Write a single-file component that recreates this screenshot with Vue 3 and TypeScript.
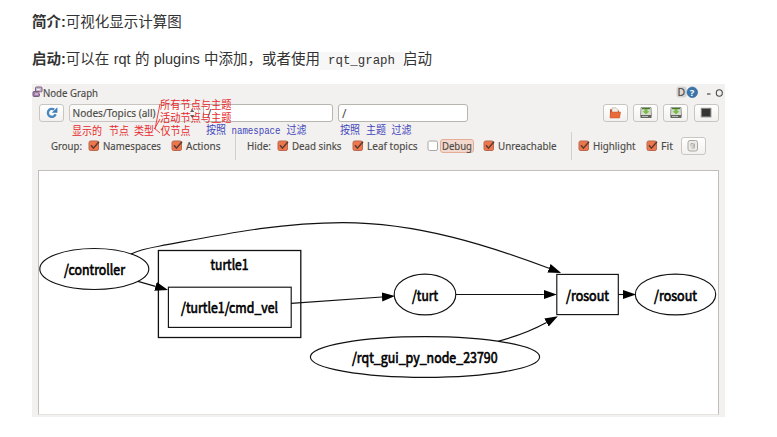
<script setup lang="ts">
interface Label { text: string; x: number; y: number; width: number }

const labels: Label[] = [
  { text: '/controller', x: 64, y: 274.5, width: 61 },
  { text: 'turtle1', x: 210.5, y: 269.5, width: 38 },
  { text: '/turtle1/cmd_vel', x: 181, y: 313, width: 97 },
  { text: '/turt', x: 412, y: 300.5, width: 26 },
  { text: '/rqt_gui_py_node_23790', x: 352, y: 362.5, width: 145.5 },
  { text: '/rosout', x: 566, y: 300.5, width: 43 },
  { text: '/rosout', x: 654, y: 300.5, width: 43 },
]

const redNotes: Label[] = [
  { text: '所有节点与主题', x: 160, y: 109, width: 71.5 },
  { text: '活动节点与主题', x: 160, y: 122, width: 71.5 },
  { text: '仅节点', x: 160.5, y: 135, width: 30 },
  { text: '显示的', x: 72, y: 135, width: 30 },
  { text: '节点', x: 109, y: 135, width: 20 },
  { text: '类型', x: 134, y: 135, width: 20 },
]

const blueNotes: Label[] = [
  { text: '按照', x: 206, y: 134, width: 20 },
  { text: 'namespace', x: 231.5, y: 134, width: 49 },
  { text: '过滤', x: 286.5, y: 134, width: 20 },
  { text: '按照', x: 340, y: 134, width: 20 },
  { text: '主题', x: 366, y: 134, width: 20 },
  { text: '过滤', x: 391.5, y: 134, width: 20 },
]

interface Option { kind: 'text' | 'check' | 'sep'; text?: string; on?: boolean; width: number; fit?: number; hot?: boolean }

const options: Option[] = [
  { kind: 'text', text: 'Group:', width: 37.5, fit: 31 },
  { kind: 'check', text: 'Namespaces', on: true, width: 83, fit: 58 },
  { kind: 'check', text: 'Actions', on: true, width: 63.5, fit: 34.5 },
  { kind: 'sep', width: 12 },
  { kind: 'text', text: 'Hide:', width: 30.5, fit: 24 },
  { kind: 'check', text: 'Dead sinks', on: true, width: 74.5, fit: 49.5 },
  { kind: 'check', text: 'Leaf topics', on: true, width: 75, fit: 50.5 },
  { kind: 'check', text: 'Debug', on: false, width: 56, fit: 30, hot: true },
  { kind: 'check', text: 'Unreachable', on: true, width: 88, fit: 58.5 },
  { kind: 'sep', width: 7 },
  { kind: 'check', text: 'Highlight', on: true, width: 68, fit: 42.5 },
  { kind: 'check', text: 'Fit', on: true, width: 35, fit: 12 },
]
</script>

<template>
  <main class="page">
    <p class="line"><strong>简介:</strong>可视化显示计算图</p>
    <p class="line second"><strong>启动:</strong>可以在 rqt 的 plugins 中添加，或者使用<code>rqt_graph</code>启动</p>

    <section class="window">
      <header class="title">
        <svg class="app" width="11" height="12" viewBox="0 0 11 12">
          <g stroke="#76627b" fill="#c9b6cf"><rect x="3.5" y="1" width="6.5" height="5" rx="1" /><rect x="1" y="5.5" width="6.5" height="5" rx="1" fill="#a17aaa" /></g>
          <path d="M5 3.5h3M3 8h3M8 6v2" stroke="#f3edf4" />
        </svg>
        <svg class="name" width="58" height="14"><text x="0" y="10.5" textLength="55" lengthAdjust="spacingAndGlyphs">Node Graph</text></svg>
        <svg class="controls" width="50" height="16" viewBox="676 84 50 16">
          <rect x="677" y="87" width="9" height="10" rx="2" fill="#dddbd6" stroke="#c3bfb8" stroke-width=".6" />
          <text x="677.5" y="96.3">D</text>
          <circle cx="692.3" cy="92.3" r="5.3" fill="#3975ab" stroke="#2d6297" stroke-width=".6" />
          <text x="689.8" y="96" class="help">?</text>
          <path d="M707 94h3.5" stroke="#4b4a46" stroke-width="1.2" />
          <ellipse cx="719.3" cy="93" rx="3" ry="3.2" fill="none" stroke="#4b4a46" stroke-width="1.1" />
        </svg>
      </header>

      <div class="toolbar">
        <button class="btn" aria-label="Refresh">
          <svg width="14" height="14" viewBox="0 0 14 14"><path d="M10.6 8.3A4 4 0 1 1 9.2 3.6" fill="none" stroke="#4a86c0" stroke-width="2.4" /><path d="M6.8 6.8h5.6V1.200z" fill="#3f7cb8" /></svg>
        </button>
        <div class="combo">
          <svg width="128" height="16"><text x="2.5" y="12" textLength="83" lengthAdjust="spacingAndGlyphs">Nodes/Topics (all)</text><path d="M120 7l2.2-3 2.2 3zM120 10l2.2 3 2.2-3z" fill="#66635f" /></svg>
        </div>
        <div class="field ns">/</div>
        <div class="field topic">/</div>
        <div class="actions">
          <button class="btn" aria-label="Open">
            <svg width="14" height="14" viewBox="0 0 14 14"><path d="M2 3.2h3.5l1 1.2H11v6H2z" fill="#b4512d" /><path d="M4 1.8h4l2 2V8H4z" fill="#f3efe8" stroke="#b9a89d" stroke-width=".6" /><path d="M2.5 6h10l-.8 6H2z" fill="#e96a3a" stroke="#c95527" stroke-width=".5" /></svg>
          </button>
          <button v-for="n in 2" :key="n" class="btn" aria-label="Save">
            <svg width="14" height="14" viewBox="0 0 14 14"><path d="M2 1.5h10l.5 8H1.5z" fill="#d8ddd1" stroke="#74786e" stroke-width=".7" /><path d="M1.5 9h11v3h-11z" fill="#62655f" /><path d="M3 2h8v1.200H3z" fill="#477c26" /><path d="M5.500 3h3v2.300h2L7 8.200 3.500 5.300h2z" fill="#76bb45" /><path d="M3 10.5h6" stroke="#b9bcb6" /></svg>
          </button>
          <button class="btn" aria-label="Image">
            <svg width="14" height="14" viewBox="0 0 14 14"><rect x="2.3" y="2.3" width="9.6" height="8.6" fill="#353535" stroke="#898985" /></svg>
          </button>
        </div>
      </div>

      <div class="options">
        <div v-for="(o, i) in options" :key="i" :class="['option', o.kind]" :style="{ width: o.width + 'px' }">
          <svg v-if="o.kind === 'check'" class="box" width="12" height="12" viewBox="0 0 12 12">
            <rect x="1" y="1" width="9.5" height="9.5" rx="1.6" :fill="o.on ? '#ed764d' : '#fff'" :stroke="o.on ? '#b9694e' : '#aaa6a0'" />
            <path v-if="o.on" d="M3 5.3l2.4 2.9L11 1.8" fill="none" stroke="#5d3a2f" stroke-width="1.5" />
          </svg>
          <span v-if="o.text" :class="{ hot: o.hot }">
            <svg :width="o.fit" height="14"><text x="0" y="10.8" :textLength="o.fit" lengthAdjust="spacingAndGlyphs">{{ o.text }}</text></svg>
          </span>
        </div>
        <button class="btn" aria-label="Fit view">
          <svg width="14" height="14" viewBox="0 0 14 14"><rect x="2" y="1.5" width="9.5" height="10.5" rx="2" fill="#ecebe8" stroke="#aaa7a2" /><path d="M5 4.5h2.2v4M5 4.5v3M8.5 4.5v4M5.5 9h3" fill="none" stroke="#aaa7a2" stroke-width=".9" /></svg>
        </button>
      </div>

      <div class="canvas">
        <svg class="graph" width="679" height="243" viewBox="39 171 679 243">
          <defs>
            <marker id="arrow" markerUnits="userSpaceOnUse" markerWidth="14" markerHeight="10" refX="0" refY="4.5" orient="auto"><path d="M0 0L13 4.5 0 9z" /></marker>
          </defs>
          <g fill="none" stroke="#111" stroke-width="1.15">
            <ellipse cx="94.3" cy="269" rx="54.5" ry="20.5" />
            <rect x="158.4" y="250.5" width="142.4" height="87" stroke-width="1.3" />
            <rect x="168.4" y="287.2" width="122.8" height="40.2" />
            <ellipse cx="425" cy="294.5" rx="30.8" ry="20.4" />
            <ellipse cx="425" cy="357" rx="114.6" ry="20.4" />
            <rect x="556.8" y="274.4" width="61.5" height="40.2" />
            <ellipse cx="675.5" cy="294.5" rx="40.2" ry="20.4" />
            <g marker-end="url(#arrow)">
              <path d="M131 254C139 250 150 247.800 160 246C220 235 278 222.600 343 222.600C418 222.600 490 246 549 268.300" />
              <path d="M138 281.400L155.500 286.400" />
              <path d="M291 303.400L382 297" />
              <path d="M456 294.500H543.800" />
              <path d="M498 341.300C516 336.500 532 330.500 546.500 322.500" />
              <path d="M618.300 294.500H623" />
            </g>
          </g>
          <text v-for="l in labels" :key="l.x" :x="l.x" :y="l.y" :textLength="l.width" lengthAdjust="spacingAndGlyphs">{{ l.text }}</text>
        </svg>
      </div>

      <svg class="notes" width="693" height="333" viewBox="32 84 693 333">
        <g class="red">
          <path d="M155 129L160 104M154.500 129L160 119M154 128L160 133" fill="none" stroke="#e33" stroke-width=".9" />
          <text v-for="(n, i) in redNotes" :key="i" :x="n.x" :y="n.y" :textLength="n.width" lengthAdjust="spacingAndGlyphs">{{ n.text }}</text>
        </g>
        <g class="blue">
          <text v-for="(n, i) in blueNotes" :key="i" :class="{ latin: n.text === 'namespace' }" :x="n.x" :y="n.y" :textLength="n.width" lengthAdjust="spacingAndGlyphs">{{ n.text }}</text>
        </g>
      </svg>
    </section>
  </main>
</template>

<style>
body { background: #fff; }
</style>

<style scoped>
.page { box-sizing: border-box; width: 777px; height: 437px; padding: 10px 32px 0; overflow: hidden; color: #333; font: 14.5px/24px "Liberation Sans", "Noto Sans CJK SC", sans-serif; }
.line { margin: 0; height: 24px; white-space: nowrap; }
.second { margin-top: 13px; word-spacing: .3px; }
code { display: inline-block; height: 18px; line-height: 18px; padding: 0 8px; background: #f7f7f7; font: 12.4px/18px "Liberation Mono", monospace; vertical-align: baseline; }
.window { position: relative; box-sizing: border-box; width: 693px; height: 333px; margin-top: 13px; background: #f2f1ef; font: 10.500px/14px "Noto Sans", sans-serif; color: #4c4a46; }
.window svg { display: block; flex: none; overflow: visible; }
.window svg text { fill: #4c4a46; stroke: #4c4a46; stroke-width: .15px; }
.title { display: flex; align-items: center; height: 16px; }
.title .name { margin-top: 2px; }
.controls { margin-left: auto; margin-right: -1px; }
.window .help { fill: #fff; stroke: none; font-weight: bold; font-size: 9.500px; }
.toolbar { display: flex; align-items: center; height: 18px; margin-top: 4px; padding: 0 6.500px 0 7px; }
.btn { box-sizing: border-box; display: flex; align-items: center; justify-content: center; width: 25px; height: 18px; padding: 0; flex: none; border: 1px solid #c9c6c1; border-radius: 3px; background: linear-gradient(#fff, #f2f1ef); }
.combo { box-sizing: border-box; width: 130px; height: 18px; margin-left: 5px; border: 1px solid #c9c6c1; border-radius: 3px; background: linear-gradient(#fbfbfa, #f2f1ef); }
.field { box-sizing: border-box; height: 18px; width: 130px; padding-left: 3px; border: 1px solid #b8b5af; border-radius: 3px; background: #fff; font-size: 12px; line-height: 17px; }
.ns { margin-left: 4px; }
.topic { margin-left: 5px; }
.actions { display: flex; gap: 5.200px; margin-left: auto; }
.options { display: flex; align-items: center; height: 29px; margin-top: 9px; padding-left: 18.500px; }
.option { display: flex; align-items: center; flex: none; height: 28px; }
.box { margin-right: 3px; }
.sep { box-sizing: border-box; border-left: 1px solid #d3d0cb; }
.hot { padding: 0 1px; margin: 0 -2px; border: 1px solid #e4ad98; border-radius: 3px; background: #f2d8cd; height: 12px; }
.hot svg { margin-top: -1px; }
.canvas { box-sizing: border-box; width: 681px; height: 245px; margin: 10px 0 0 6px; border: 1px solid #c1bdb8; border-bottom-color: #e6e4e1; background: #fff; }
.graph { font: 14.500px "Noto Sans CJK SC", sans-serif; }
.window .graph text { fill: #000; stroke: #000; stroke-width: .65px; }
.notes { position: absolute; left: 0; top: 0; font: 10.800px "Noto Sans CJK SC", sans-serif; pointer-events: none; }
.window .red text { fill: #e6282d; stroke: none; }
.window .blue text { fill: #4245bd; stroke: none; }
.window .notes .latin { font-family: "Liberation Mono", monospace; font-size: 10px; }
</style>
